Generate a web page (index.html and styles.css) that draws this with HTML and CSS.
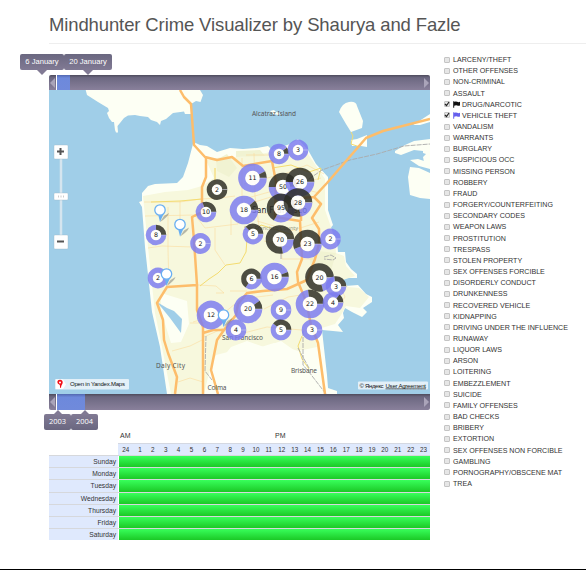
FILE: index.html
```html
<!DOCTYPE html>
<html lang="en">
<head>
<meta charset="utf-8">
<title>Mindhunter Crime Visualizer</title>
<link rel="stylesheet" href="styles.css">
</head>
<body>
<header class="head"><h1>Mindhunter Crime Visualizer by Shaurya and Fazle</h1></header>
<div class="main">
  <section class="left">
    <div class="labels days"><span class="tag first">6 January</span><span class="tag second">20 January</span></div>
    <div class="slider top"><i class="arrow prev"></i><b class="range"></b><i class="arrow next"></i></div>
    <svg class="map" viewBox="49 90 381 304" width="381" height="304">
      <rect class="sea" x="49" y="90" width="381" height="304"/>
      <g class="land">
        <path d="M85.7 90L87 95 98 102 108 108 109 111 107 113 109 118 112 122 114 122 115 130 116 132.500H118L117.500 126 120 123 124 118 128 115.500 135 115 140 116 148 117 151 120 157 122 160 125 161 121 166 119 173 113 184 111.500 185 114 191 114V104L196 101 200.500 102 203 95 200 90Z"/>
        <path d="M193.500 142L200 145 207 146 217 152 230 148 243 149 257 148 268 146 272 150 290 144 298 139 308 150 316 164 328 177V210L333 225 329 230 337 240 338 252 345 252 346 262 351 269 357 274V278L343 278 345 286 358 285 366 294 372 297V302L363 308 367 312 362 317 352 312 345 308 343 313 344 318 338 325 343 332 333 331 322 330 327 375 328 388 337 391V394H167L160 347 152 312 145 247 142 207 139 202 142 201V193L148 186 155 184 177 183 183 177 188 163Z"/>
        <path d="M339 112Q342 103 349 102T357 106L363 121 362 128 351 132 346 124ZM351 140L357 139 367 135V147L361 146 352 146ZM270 111l4-1 2 2 4 1-1 2-6-1Z"/>
        <path d="M413 125L430 114V122L420 125ZM395 151L405 145 414 141 430 139V169L425 167 423 157 426 154 423 153V151L414 150 401 155 395 153ZM410 160L418 159 430 163V169L419 166ZM410 167L419 168 430 173V199L420 198 410 195 408 177Z"/>
      </g>
      <path class="city" d="M143 196L165 192 188 190 202 186 214 178 206 160 222 157 240 157 272 152 299 146 308 154 325 179 325 210 331 227 335 241 336 253 344 256 346 266 355 276 343 280 348 287 359 288 369 297 360 308 346 306 341 315 335 324 315 330 317 347 298 351 274 343 261 347 242 343 232 351 216 355 210 369 204 394H171L162 347 155 313 148 247Z"/>
      <path class="park" d="M216 160L227 154 237 168 229 177 217 171ZM236 151L260 150 265 156 236 157ZM309 250L336 253 329 278 311 271Z"/>
      <path class="land" d="M161 293L187 301 189 324 181 342 171 343 161 311ZM216 366L231 347 247 341 264 347 281 341 298 353 321 350 325 393H211Z"/>
      <path class="sea" d="M157 302L167 308 174 311 182 319 181 333 170 318Z"/>
      <path class="minor" d="M144 202H180L201 199 220 198 235 196M145 216L195 215 205 228 238 224 242 211 292 216M148 248L162 246 193 247M168 207V249L169 287M215 228V250L225 265M198 285L216 286 224 293 216 293M215 168V191M242 158L242 204M254 153L255 196 259 226M244 184L287 173 307 165 324 174M244 199L298 184 321 178M245 205L300 188 319 193M257 221L291 231 319 222M230 291H247M193 322L224 313 241 299 273 295M204 337L226 327 247 305M190 323H205M172 351L190 346 204 339M178 382L190 378 203 382M280 235L282 259 313 259M246 155H272M274 173L297 207M264 241L293 248M231 212V235M180 201V225M236 335L267 327 313 331M341 289L345 297 339 306M264 309L288 297 307 294"/>
      <path class="yellow" d="M151 202L180 201 202 199M215 168V181M272 168L291 165 309 172 321 168 318 180M200 286L209 279 218 273 226 265 240 263 246 252 247 239 261 225 293 235M302 336L298 346 302 359 309 369M351 132L353 136 351 144 360 147M193 217L208 212"/>
      <path class="rail" d="M309 179L322 170 350 160 377 154 404 146 430 144M303 331V365L309 372 326 394M298 348L309 368M281 236V260M206 336L205 371 212 380M324 257l7-2 5 3-3 2-9-1"/>
      <g class="roads">
        <path d="M180 90L184 97 191 104 194 145 205 157 217 160 232 157 243 166 272 161 276 182 275 217 300 221 302 259 297 272 298 282 306 301 311 325 318 343 325 394"/>
        <path d="M206 158V177L202 187V212L192 217 194 240 197 285V310L203 327V394M197 285L167 287 157 303 163 320 164 340 168 353 177 377 175 394M203 333L213 330 224 330 236 315 238 304 247 293 263 291 287 289 307 280 315 259 319 244V229L312 218 321 204 314 197 301 198 301 221M314 197L327 183 366 138 383 131 430 119M224 330L217 340 211 370 218 394"/>
      </g>
      <g class="places">
        <text x="252" y="116" textLength="44">Alcatraz Island</text>
        <text class="major" x="252" y="213" textLength="55">San Francisco</text>
        <text class="county" x="244" y="230" textLength="54">San Francisco County</text>
        <text x="156" y="368" textLength="29">Daly City</text>
        <text x="207.500" y="390" textLength="19">Colma</text>
        <text x="222" y="340" textLength="41">San Francisco</text>
        <text x="291" y="373" textLength="26">Brisbane</text>
      </g>
      <g id="clusters"></g>
      <g id="pins"></g>
      <rect class="credit" x="55" y="379" width="74" height="10.500" rx="1"/>
      <path class="plate" d="M56 379.500h7l3 5-3 4.500h-7Z"/>
      <path class="ypin" fill-rule="evenodd" d="M60 379.800a2.700 2.700 0 0 1 2.700 2.700c0 2-1.700 2.500-1.700 5.300h-1c0-2 .1-2.600-.7-3.200-2.600-1-2.600-4.800.7-4.800m0 1.700a1 1 0 1 0 0 2 1 1 0 0 0 0-2"/>
      <text class="small" x="70" y="386.300" textLength="55">Open in Yandex.Maps</text>
      <rect class="credit" x="358" y="381.500" width="70" height="8" rx="1"/>
      <text class="small" x="359.500" y="387.600" textLength="24">© Яндекс</text>
      <text class="small under" x="385.500" y="387.600" textLength="40.500">User Agreement</text>
      <g class="control">
        <path class="track" d="M61 158V237"/>
        <rect x="54" y="145" width="14" height="14" rx="1"/><path class="sign" d="M57 151.500h7M60.500 148v7"/>
        <rect x="54" y="193" width="14" height="7" rx="1"/><path class="grip" d="M58.500 195.500v2M61 195.500v2M63.500 195.500v2"/>
        <rect x="54" y="235" width="14" height="14" rx="1"/><path class="sign" d="M57 241.500h7"/>
      </g>
    </svg>
    <div class="slider bottom"><i class="arrow prev"></i><b class="range"></b><i class="arrow next"></i></div>
    <div class="labels years"><span class="tag">2003</span><span class="tag">2004</span></div>
    <div class="halves"><span>AM</span><span>PM</span></div>
    <div class="hours" id="hours"></div>
    <div id="week"></div>
  </section>
  <ul class="kinds" id="kinds"></ul>
</div>
<script src="app.js"></script>
</body>
</html>
```
FILE: styles.css
```css
* { box-sizing: border-box; }
body { margin: 0; height: 570px; overflow: hidden; background: #fff; border-bottom: 1px solid #000; font-family: "Liberation Sans", Arial, sans-serif; color: #333; }
.head { height: 44px; margin-left: 49px; border-bottom: 1px solid #eee; }
h1 { margin: 0; padding-top: 13px; font-size: 18.500px; letter-spacing: -.12px; line-height: 23px; font-weight: 400; color: #555; white-space: nowrap; }
.main { display: flex; padding: 10px 0 0 49px; }
.left { width: 381px; flex: none; }
.labels { display: flex; }
.days { height: 21px; margin-left: -29px; }
.years { height: 20px; margin-left: -5px; padding-top: 4px; }
.tag { position: relative; height: 16px; line-height: 15px; border-radius: 2px; background: linear-gradient(#6a6780, #817a94); color: #fff; font-size: 7.600px; text-align: center; white-space: nowrap; }
.first { width: 44px; }
.second { width: 48px; }
.years .tag { width: 27px; font-family: "Open Sans", sans-serif; font-size: 7.500px; background: linear-gradient(#817a94, #6a6780); }
.tag::after { content: ""; position: absolute; left: 50%; top: 100%; margin-left: -5px; border: 5px solid transparent; border-bottom: 0; border-top-color: #817a94; }
.years .tag::after { top: -4px; border: 5px solid transparent; border-top: 0; border-bottom-color: #817a94; }
.slider { display: flex; justify-content: space-between; background: linear-gradient(#4e4b5c, #6c6881 18%, #89809b); border-radius: 2px 2px 0 0; }
.top { height: 15px; }
.bottom { height: 16px; border-radius: 0 0 2px 2px; }
.range { width: 14px; margin-right: auto; border-left: 1px solid #fff; background: linear-gradient(#5268b0, #6d89dc 20%, #708adb); }
.bottom .range { width: 29px; }
.arrow { width: 7px; display: flex; align-items: center; justify-content: center; }
.arrow::before { content: ""; border: 5px solid transparent; border-width: 5px 0; }
.prev::before { border-right: 5px solid #aaa4b9; }
.next::before { border-left: 5px solid #aaa4b9; }
.map { display: block; }
.sea { fill: #a0cee8; }
.land { fill: #fdfff4; }
.city { fill: #f7f8dd; }
.park { fill: #f1f3d2; }
.minor, .yellow, .rail, .roads { fill: none; }
.minor { stroke: #fbd998; stroke-width: .7; opacity: .8; }
.yellow { stroke: #f4dc70; stroke-width: 1; }
.rail { stroke: #aaa; stroke-width: .9; stroke-dasharray: 5 1; }
.roads { stroke: #fdbd6b; stroke-width: 2.500; stroke-linejoin: round; }
.places { font-family: "Noto Sans", sans-serif; font-size: 6.500px; fill: #555; }
.major { font-size: 8px; fill: #222; }
.county { font-size: 5.500px; fill: #9a9c88; }
.small { font-size: 6px; fill: #111; }
.under { text-decoration: underline; }
.credit { fill: #fff; opacity: .7; }
.plate { fill: #fff; }
.ypin { fill: #f10f18; }
.count { font-family: "DejaVu Sans", sans-serif; font-size: 6.300px; fill: #111; text-anchor: middle; }
.ring { fill: none; stroke: #7c7cef; opacity: .84; }
.ring.dark { stroke: #2c2c24; }
.hole { fill: #fff; opacity: .9; }
.cut { stroke: #d9d9ee; stroke-width: .5; }
.shadow { fill: #555; opacity: .4; }
.pin { fill: #fff; stroke: #69aff2; stroke-width: 1.300; }
.tail { fill: #69aff2; }
.control rect { fill: #fff; stroke: #9eb9c8; stroke-width: .4; }
.track { stroke: #d5e5ef; stroke-width: 2.500; }
.sign { stroke: #555; stroke-width: 2; }
.grip { stroke: #ccc; stroke-width: 1; }
.halves { display: grid; grid-template-columns: 155px 1fr; height: 13px; padding-left: 71px; font-size: 7px; line-height: 12px; }
.hours { display: grid; grid-template-columns: 15.500px repeat(23, 1fr); height: 12px; margin-left: 69px; border-top: 1px solid #d4d8e2; background: #dfe9fd; text-align: center; font-size: 6.300px; line-height: 11px; }
.day { display: grid; grid-template-columns: 69px 1fr; height: 12.200px; border-top: 1px solid #d6d8dc; font-size: 6.700px; line-height: 11px; }
.name { background: #dfe9fd; text-align: right; padding-right: 2px; }
.bar { background: linear-gradient(#38ff5b, #1bc926); margin-left: 1px; }
.kinds { list-style: none; margin: 0 0 0 14px; padding: 1px 0 0; font-size: 7.100px; color: #333; }
.kinds li { display: flex; align-items: center; height: 11.170px; line-height: 11px; white-space: nowrap; }
.box { width: 6px; height: 6px; margin: -2px 3px 0 0; border: 1px solid #c4c4c4; border-radius: 1px; background: #e6e6e6; display: flex; flex: none; }
.box svg { width: 6px; height: 6px; margin: -1px; flex: none; fill: none; stroke: #222; stroke-width: 1.200; }
.flag { width: 7px; height: 7px; margin: -2px 2px 0 0; flex: none; }
```
FILE: app.js
```js
// x, y, count, outer radius, start of the dark arc (degrees clockwise from top; it ends at 90)
const clusters = [
  [279,154,8,10.3,50],[298,150,3,10.3,90],[252.5,178,11,14.3,62],[283,187,50,14.3,-90],[300,182,26,14.3,-90],
  [244,210,18,14.3,50],[281,208,95,14.3,-150],[298,202.5,28,14.3,-190],[217,189.5,2,10.3,-269],[206,212,10,10.3,-20],
  [156,235,8,10.3,0],[200.5,243.5,2,10.3,90],[253,234,5,10.3,-45],[280,239.5,70,14.3,-192],[307.5,244,23,14.3,-110],
  [330.5,239,2,10.3,90],[158,278,2,10.3,90],[251.5,279,6,10.3,-145],[274.5,277,16,14.3,70],[319.5,277.5,20,14.3,-195],
  [336,286.5,3,10.3,-10],[310,304,22,14.3,-8],[333,302.500,4,10.3,40],[211,315,12,14.3,90],[248,309,20,14.3,55],
  [281,310,9,10.3,90],[281,330,5,10.3,-50],[236,330,4,10.3,90],[312,330,3,10.3,90]
];
function arc(x, y, r, from, to) {
  const p = a => { const t = a * Math.PI / 180; return (x + r * Math.sin(t)).toFixed(2) + ' ' + (y - r * Math.cos(t)).toFixed(2); };
  return `M${p(from)}A${r} ${r} 0 ${to - from > 180 ? 1 : 0} 1 ${p(to)}`;
}
document.getElementById('clusters').innerHTML = clusters.map(([x, y, n, out, start]) => {
  const inner = out > 12 ? 7.3 : 5.3, w = out - inner, r = inner + w / 2;
  return `<circle class="hole" cx="${x}" cy="${y}" r="${inner}"/>` +
    (start > -269 ? `<path class="ring" stroke-width="${w}" d="${arc(x, y, r, 90.5, start + 359.8)}"/>` : '') +
    (start < 90 ? `<path class="ring dark" stroke-width="${w}" d="${arc(x, y, r, start, 89.8)}"/>` : '') +
    `<path class="cut" d="M${x + inner} ${y}h${w}"/><text class="count" x="${x}" y="${y + 2.2}">${n}</text>`;
}).join('');
document.getElementById('pins').innerHTML = [[160,210],[180,224.5],[166.5,274],[223.5,315]].map(([x, y]) =>
  `<path class="shadow" d="M${x} ${y + 12}L${x + 4} ${y + 6}L${x + 9} ${y + 3}Q${x + 8} ${y + 7} ${x} ${y + 12}"/>` +
  `<path class="tail" d="M${x - 2} ${y + 4}L${x} ${y + 12}L${x + 4} ${y + 3}Z"/><circle class="pin" cx="${x}" cy="${y}" r="5.2"/>`).join('');
document.getElementById('hours').innerHTML = [24, ...Array.from({length: 23}, (_, i) => i + 1)].map(h => `<span>${h}</span>`).join('');
document.getElementById('week').innerHTML = ['Sunday','Monday','Tuesday','Wednesday','Thursday','Friday','Saturday']
  .map(d => `<div class="day"><span class="name">${d}</span><span class="bar"></span></div>`).join('');
const kinds = ['LARCENY/THEFT','OTHER OFFENSES','NON-CRIMINAL','ASSAULT','DRUG/NARCOTIC','VEHICLE THEFT','VANDALISM','WARRANTS','BURGLARY','SUSPICIOUS OCC','MISSING PERSON','ROBBERY','FRAUD','FORGERY/COUNTERFEITING','SECONDARY CODES','WEAPON LAWS','PROSTITUTION','TRESPASS','STOLEN PROPERTY','SEX OFFENSES FORCIBLE','DISORDERLY CONDUCT','DRUNKENNESS','RECOVERED VEHICLE','KIDNAPPING','DRIVING UNDER THE INFLUENCE','RUNAWAY','LIQUOR LAWS','ARSON','LOITERING','EMBEZZLEMENT','SUICIDE','FAMILY OFFENSES','BAD CHECKS','BRIBERY','EXTORTION','SEX OFFENSES NON FORCIBLE','GAMBLING','PORNOGRAPHY/OBSCENE MAT','TREA'];
const flags = {'DRUG/NARCOTIC': '#111', 'VEHICLE THEFT': '#6660ed'};
document.getElementById('kinds').innerHTML = kinds.map(k => {
  const c = flags[k];
  return `<li><span class="box">${c ? '<svg viewBox="0 0 6 6"><path d="M1 3l1.500 1.500L5 1"/></svg>' : ''}</span>` +
    (c ? `<svg class="flag" viewBox="0 0 7 7" fill="${c}"><path d="M.2.300h1v6.400h-1zM1.200.8Q3 0 4.200 .8T7 .8V4.500Q5.400 5.200 4.200 4.500T1.200 4.700z"/></svg>` : '') + `${k}</li>`;
}).join('');
```
